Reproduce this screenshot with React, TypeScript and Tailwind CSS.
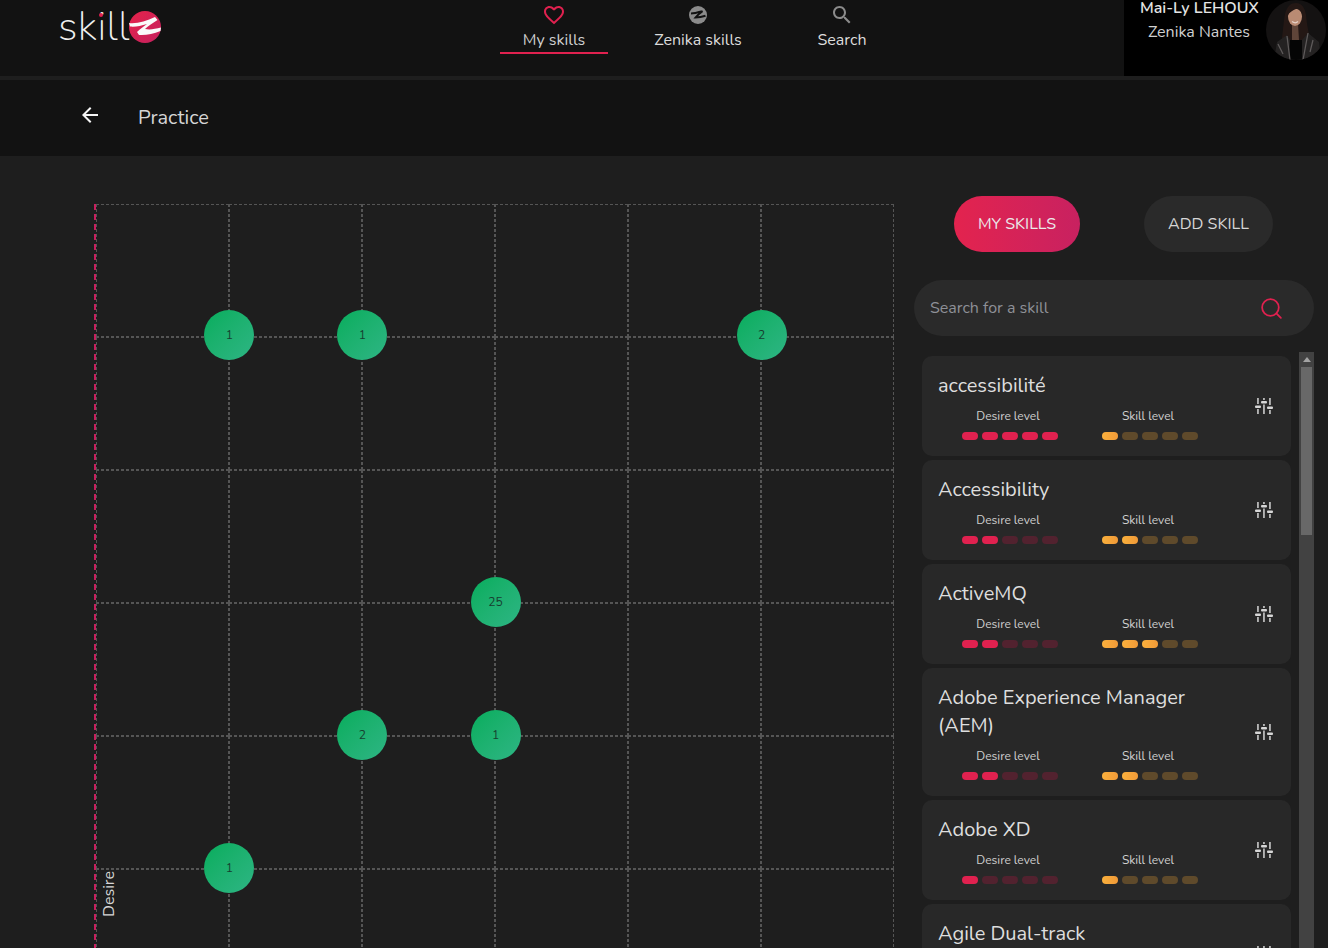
import { Search } from "lucide-react";

interface Skill {
  name: string;
  desire: number;
  level: number;
}

const SKILLS: Skill[] = [
  { name: "accessibilité", desire: 5, level: 1 },
  { name: "Accessibility", desire: 2, level: 2 },
  { name: "ActiveMQ", desire: 2, level: 3 },
  { name: "Adobe Experience Manager (AEM)", desire: 2, level: 2 },
  { name: "Adobe XD", desire: 1, level: 1 },
  { name: "Agile Dual-track", desire: 1, level: 1 },
];

// row / col of the grid cell whose top-left corner holds a bubble
const BUBBLES = [
  { row: 1, col: 1, count: 1 },
  { row: 1, col: 2, count: 1 },
  { row: 1, col: 5, count: 2 },
  { row: 3, col: 3, count: 25 },
  { row: 4, col: 2, count: 2 },
  { row: 4, col: 3, count: 1 },
  { row: 5, col: 1, count: 1 },
];

function TuneIcon() {
  return (
    <svg width="20" height="18" viewBox="0 0 20 18" fill="#d6d6d6">
      <rect x="3.2" y="1" width="1.5" height="6" />
      <rect x="3.2" y="12" width="1.5" height="5" />
      <rect x="1" y="8.5" width="6" height="2.5" rx="1" />
      <rect x="9.2" y="1" width="1.5" height="2" />
      <rect x="9.2" y="7.5" width="1.5" height="9.5" />
      <rect x="7" y="4" width="6" height="2.5" rx="1" />
      <rect x="15.2" y="1" width="1.5" height="7" />
      <rect x="15.2" y="13" width="1.5" height="4" />
      <rect x="13" y="9.5" width="6" height="2.5" rx="1" />
    </svg>
  );
}

function Logo() {
  return (
    <div className="relative flex items-center h-[48px]">
      <span className="font-extralight text-[41px] leading-[48px] text-[#f0f0f0] tracking-[0.4px] w-[72px]">skill</span>
      <span className="absolute left-[41px] top-[10px] w-[4px] h-[4px] rounded-full bg-[#e0214f]" />
      <svg width="32" height="32" viewBox="0 0 32 32" className="-ml-[1px]">
        <defs>
          <linearGradient id="logoZ" x1="0" y1="0" x2="1" y2="1">
            <stop offset="0" stopColor="#e6234a" />
            <stop offset="1" stopColor="#c4215f" />
          </linearGradient>
        </defs>
        <circle cx="16" cy="16" r="16" fill="url(#logoZ)" />
        <path
          d="M0 12 C8 13 17 10 26 6 L28.5 9 C24 12 19 15 16 18 C21 19 26 18 32 16.5 L31.5 20 C24 23 17 24.5 10 24 L8 21 C11 18 15 15 18 13 C12 15 6 16 1 15.5 Z"
          fill="#fafafa"
        />
      </svg>
    </div>
  );
}

function ZenikaIcon() {
  return (
    <svg width="18" height="18" viewBox="0 0 18 18">
      <circle cx="9" cy="9" r="9" fill="#8b8b8b" />
      <path d="M2 7.5 C6 7.5 9 6.5 13.5 5.2 C11 7 8.5 9 6.5 11.5 C10 11.5 13 11 16.5 9.8" fill="none" stroke="#121212" strokeWidth="2" />
    </svg>
  );
}

function Avatar() {
  return (
    <svg width="60" height="60" viewBox="0 0 60 60" className="shrink-0">
      <defs>
        <clipPath id="avatarClip">
          <circle cx="30" cy="30" r="30" />
        </clipPath>
      </defs>
      <g clipPath="url(#avatarClip)">
        <rect width="60" height="60" fill="#141212" />
        <path d="M15 44 C17 34 17 24 19 14 C21 6 25 3 30 3 C36 3 39 8 40 15 C41 26 43 36 46 44 L30 50 Z" fill="#241815" />
        <path d="M8 60 L11 42 L21 35 L24 40 L36 40 L42 33 L53 42 L55 60 Z" fill="#242222" />
        <path d="M24 40 L36 40 L36 60 L23 60 Z" fill="#050505" />
        <path d="M21 36 L24 60 M42 33 L37 60 M47 40 L44 52 M12 44 L17 54" fill="none" stroke="#5e5a5a" strokeWidth="1.3" />
        <path d="M26 24 L32 24 L33 40 L26 40 Z" fill="#5f4539" />
        <ellipse cx="29" cy="16.5" rx="7" ry="9.5" fill="#b98b73" />
        <path d="M21.5 16 C21.5 8 25 5.5 30 5.5 C34 5.5 36.5 9 36.5 16 C35 11 33 9 30 9 C27 10 23.5 12 21.5 16 Z" fill="#241815" />
        <path d="M26 21.5 C28 23 30.5 23 32 21.5" fill="none" stroke="#e6d2c8" strokeWidth="1.2" />
      </g>
    </svg>
  );
}

function Header() {
  return (
    <header className="flex h-[76px] bg-[#121212]">
      <div className="w-[500px] shrink-0 pl-[58px] pt-[3px]">
        <Logo />
      </div>
      <nav className="flex gap-[36px] h-[54px]">
        <div className="w-[108px] flex flex-col items-center border-b-2 border-[#e0214f]">
          <svg width="24" height="24" viewBox="0 0 24 24" fill="#e0214f" className="mt-[3px]">
            <path d="M16.5 3c-1.74 0-3.41.81-4.5 2.09C10.91 3.81 9.24 3 7.5 3 4.42 3 2 5.42 2 8.5c0 3.78 3.4 6.86 8.55 11.54L12 21.35l1.45-1.32C18.6 15.36 22 12.28 22 8.5 22 5.42 19.58 3 16.5 3zm-4.4 15.55l-.1.1-.1-.1C7.14 14.24 4 11.39 4 8.5 4 6.5 5.5 5 7.5 5c1.54 0 3.04.99 3.57 2.36h1.87C13.46 5.99 14.96 5 16.5 5c2 0 3.5 1.5 3.5 3.5 0 2.89-3.14 5.74-7.9 10.05z" />
          </svg>
          <span className="text-[16px] leading-[24px] mt-[1px] text-[#cfcfcf]">My skills</span>
        </div>
        <div className="w-[108px] flex flex-col items-center">
          <div className="h-[18px] mt-[6px]">
            <ZenikaIcon />
          </div>
          <span className="text-[16px] leading-[24px] mt-[4px] text-[#dcdcdc] whitespace-nowrap">Zenika skills</span>
        </div>
        <div className="w-[108px] flex flex-col items-center">
          <svg width="24" height="24" viewBox="0 0 24 24" fill="#8b8b8b" className="mt-[3px]">
            <path d="M15.5 14h-.79l-.28-.27C15.41 12.59 16 11.11 16 9.5 16 5.91 13.09 3 9.5 3S3 5.91 3 9.5 5.91 16 9.5 16c1.61 0 3.09-.59 4.23-1.57l.27.28v.79l5 4.99L20.49 19l-4.99-5zm-6 0C7.01 14 5 11.99 5 9.5S7.01 5 9.5 5 14 7.01 14 9.5 11.99 14 9.5 14z" />
          </svg>
          <span className="text-[16px] leading-[24px] mt-[1px] text-[#dcdcdc]">Search</span>
        </div>
      </nav>
      <div className="ml-auto w-[204px] h-[76px] bg-black flex overflow-hidden">
        <div className="w-[118px] ml-[16px] mr-[8px] text-center shrink-0 -mt-[4px]">
          <div className="text-[16px] leading-[24px] font-semibold text-[#e4e4e4] whitespace-nowrap">Mai-Ly LEHOUX</div>
          <div className="text-[16px] leading-[24px] text-[#d0d0d0] whitespace-nowrap">Zenika Nantes</div>
        </div>
        <Avatar />
      </div>
    </header>
  );
}

function Chart() {
  const cells = [];
  for (let row = 0; row < 6; row++) {
    for (let col = 0; col < 6; col++) {
      const bubble = BUBBLES.find((b) => b.row === row && b.col === col);
      cells.push(
        <div key={`${row}-${col}`} className="relative border border-dashed border-[#555555]">
          {bubble && (
            <div className="absolute z-10 -left-[25.7px] -top-[27.7px] w-[50px] h-[50px] rounded-full bg-gradient-to-br from-[#04ad5c] to-[#2db584] flex items-center justify-center text-[12px] text-[#173f30]">
              {bubble.count}
            </div>
          )}
        </div>
      );
    }
  }
  return (
    <div className="relative flex ml-[94px] mt-[48px] w-[800px] h-[798px] shrink-0">
      <div className="w-[2px] shrink-0 bg-[repeating-linear-gradient(to_bottom,#c9205f_0,#c9205f_6px,transparent_6px,transparent_10px)]" />
      <div className="grid grid-cols-[repeat(6,133.08px)] grid-rows-[repeat(6,133.08px)]">
        {cells}
      </div>
      <span className="absolute z-10 left-[5px] top-[667px] [writing-mode:vertical-rl] rotate-180 text-[16px] leading-[20px] text-[#d6d6d6]">Desire</span>
    </div>
  );
}

function Dots({ value, on, off }: { value: number; on: string; off: string }) {
  return (
    <div className="flex gap-[4px] mt-[7px]">
      {[1, 2, 3, 4, 5].map((i) => (
        <div key={i} className={`w-[16px] h-[8px] rounded-full ${i <= value ? on : off}`} />
      ))}
    </div>
  );
}

function SkillCard({ skill }: { skill: Skill }) {
  return (
    <div className="flex items-center w-[369px] rounded-[10px] bg-[#282828] shrink-0">
      <div className="w-[310px] pl-[16px] pt-[16px] pb-[16px]">
        <div className="text-[20px] leading-[28px] text-[#dedede]">{skill.name}</div>
        <div className="flex gap-[44px] ml-[24px] mt-[7px]">
          <div className="w-[96px]">
            <div className="w-[92px] text-center text-[12px] leading-[18px] text-[#d0d0d0] whitespace-nowrap">Desire level</div>
            <Dots value={skill.desire} on="bg-[#e0214f]" off="bg-[#52222f]" />
          </div>
          <div className="w-[96px]">
            <div className="w-[92px] text-center text-[12px] leading-[18px] text-[#d0d0d0] whitespace-nowrap">Skill level</div>
            <Dots value={skill.level} on="bg-gradient-to-r from-[#fab03c] to-[#f09a38]" off="bg-[#5f4a2b]" />
          </div>
        </div>
      </div>
      <div className="ml-[22px]">
        <TuneIcon />
      </div>
    </div>
  );
}

function Sidebar() {
  return (
    <aside className="ml-[20px] w-[400px] pt-[40px] shrink-0">
      <div className="flex gap-[64px] ml-[40px]">
        <button className="w-[126px] h-[56px] rounded-[28px] bg-gradient-to-r from-[#e3234e] to-[#c82160] text-[16px] text-[#eaeaea]">MY SKILLS</button>
        <button className="w-[129px] h-[56px] rounded-[28px] bg-[#2a2a2a] text-[16px] text-[#d6d6d6]">ADD SKILL</button>
      </div>
      <div className="flex items-center h-[56px] mt-[28px] rounded-[28px] bg-[#2a2a2a] pl-[16px] pr-[30px]">
        <input
          placeholder="Search for a skill"
          className="flex-1 bg-transparent outline-none text-[16px] placeholder:text-[#8e9097]"
        />
        <Search size={25} strokeWidth={1.7} className="text-[#e0214f]" />
      </div>
      <div className="flex mt-[16px] h-[596px] overflow-hidden">
        <div className="flex flex-col gap-[4px] ml-[8px] pt-[4px] w-[377px]">
          {SKILLS.map((s) => (
            <SkillCard key={s.name} skill={s} />
          ))}
        </div>
        <div className="w-[15px] h-full bg-[#424242] flex flex-col items-center">
          <div className="mt-[5px] w-0 h-0 border-x-[4px] border-x-transparent border-b-[5px] border-b-[#a3a3a3]" />
          <div className="mt-[5px] w-[11px] h-[168px] bg-[#686868]" />
        </div>
      </div>
    </aside>
  );
}

export default function App() {
  return (
    <div className="h-[948px] w-[1328px] overflow-hidden bg-[#1e1e1e] font-['Nunito','Noto_Sans',sans-serif]">
      <Header />
      <div className="h-[4px]" />
      <div className="flex items-center h-[76px] bg-[#121212] pl-[78px] gap-[36px]">
        <svg width="24" height="24" viewBox="0 0 24 24" fill="#f5f5f5" className="-mt-[6px]">
          <path d="M20 11H7.83l5.59-5.59L12 4l-8 8 8 8 1.41-1.41L7.83 13H20v-2z" />
        </svg>
        <span className="text-[20px] text-[#d6d6d6]">Practice</span>
      </div>
      <div className="flex">
        <Chart />
        <Sidebar />
      </div>
    </div>
  );
}
